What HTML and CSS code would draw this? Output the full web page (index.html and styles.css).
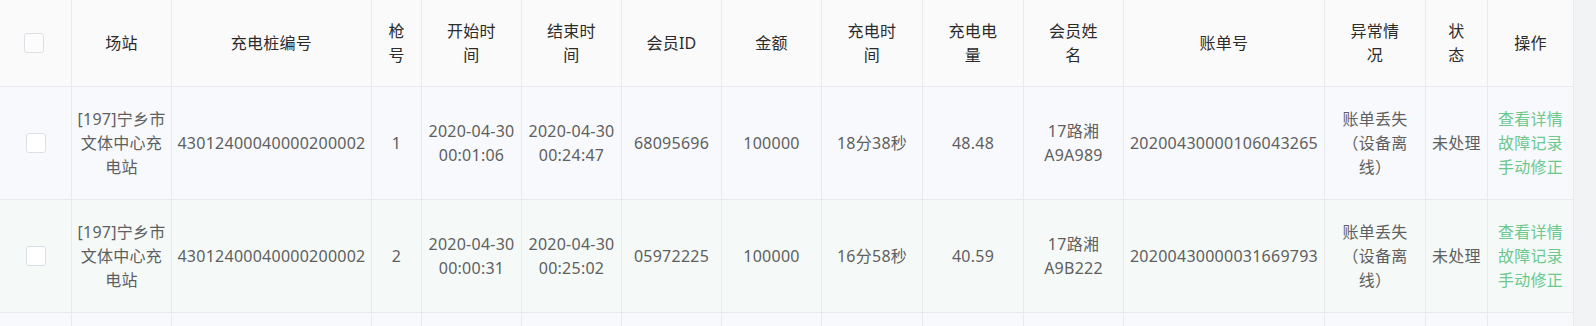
FILE: index.html
```html
<!DOCTYPE html>
<html lang="zh-CN">
<head>
<meta charset="utf-8">
<title>充电记录</title>
<link rel="stylesheet" href="styles.css">
</head>
<body>
<div class="page">
  <div class="grid">
    <div class="th"><span class="cb cb-head"></span></div>
    <div class="th"><span>场站</span></div>
    <div class="th"><span>充电桩编号</span></div>
    <div class="th"><span>枪号</span></div>
    <div class="th"><span>开始时间</span></div>
    <div class="th"><span>结束时间</span></div>
    <div class="th"><span>会员ID</span></div>
    <div class="th"><span>金额</span></div>
    <div class="th"><span>充电时间</span></div>
    <div class="th"><span>充电电量</span></div>
    <div class="th"><span>会员姓名</span></div>
    <div class="th"><span>账单号</span></div>
    <div class="th"><span>异常情况</span></div>
    <div class="th"><span>状态</span></div>
    <div class="th"><span>操作</span></div>

    <div class="td r1"><span class="cb cb-body"></span></div>
    <div class="td r1"><span>[197]宁乡市文体中心充电站</span></div>
    <div class="td r1"><span>43012400040000200002</span></div>
    <div class="td r1"><span>1</span></div>
    <div class="td r1"><span>2020-04-30 00:01:06</span></div>
    <div class="td r1"><span>2020-04-30 00:24:47</span></div>
    <div class="td r1"><span>68095696</span></div>
    <div class="td r1"><span>100000</span></div>
    <div class="td r1"><span>18分38秒</span></div>
    <div class="td r1"><span>48.48</span></div>
    <div class="td r1"><span>17路湘A9A989</span></div>
    <div class="td r1"><span>20200430000106043265</span></div>
    <div class="td r1"><span>账单丢失（设备离线）</span></div>
    <div class="td r1"><span>未处理</span></div>
    <div class="td r1"><span class="ops"><a class="op">查看详情</a><a class="op">故障记录</a><a class="op">手动修正</a></span></div>

    <div class="td r2"><span class="cb cb-body"></span></div>
    <div class="td r2"><span>[197]宁乡市文体中心充电站</span></div>
    <div class="td r2"><span>43012400040000200002</span></div>
    <div class="td r2"><span>2</span></div>
    <div class="td r2"><span>2020-04-30 00:00:31</span></div>
    <div class="td r2"><span>2020-04-30 00:25:02</span></div>
    <div class="td r2"><span>05972225</span></div>
    <div class="td r2"><span>100000</span></div>
    <div class="td r2"><span>16分58秒</span></div>
    <div class="td r2"><span>40.59</span></div>
    <div class="td r2"><span>17路湘A9B222</span></div>
    <div class="td r2"><span>20200430000031669793</span></div>
    <div class="td r2"><span>账单丢失（设备离线）</span></div>
    <div class="td r2"><span>未处理</span></div>
    <div class="td r2"><span class="ops"><a class="op">查看详情</a><a class="op">故障记录</a><a class="op">手动修正</a></span></div>

    <div class="td r1 tail"></div>
    <div class="td r1 tail"></div>
    <div class="td r1 tail"></div>
    <div class="td r1 tail"></div>
    <div class="td r1 tail"></div>
    <div class="td r1 tail"></div>
    <div class="td r1 tail"></div>
    <div class="td r1 tail"></div>
    <div class="td r1 tail"></div>
    <div class="td r1 tail"></div>
    <div class="td r1 tail"></div>
    <div class="td r1 tail"></div>
    <div class="td r1 tail"></div>
    <div class="td r1 tail"></div>
    <div class="td r1 tail"></div>
  </div>
  <div class="gutter"></div>
</div>
</body>
</html>
```

FILE: styles.css
```css
html, body {
  margin: 0;
  padding: 0;
  background: #ffffff;
}
body {
  font-family: "Noto Sans", "Noto Sans CJK SC", sans-serif;
  font-size: 16px;
  line-height: 24px;
  letter-spacing: 0.25px;
  text-spacing-trim: space-all;
  overflow: hidden;
}
.page {
  display: flex;
  width: 1596px;
  height: 326px;
  overflow: hidden;
}
.grid {
  display: grid;
  grid-template-columns: 72px 100px 200px 50px 100px 100px 100px 100px 101px 101px 100px 201px 101px 62px 86px;
  grid-auto-rows: auto;
  align-content: start;
  flex: none;
  width: 1574px;
}
.gutter {
  flex: 1;
  background: #f2f3f5;
}
.th, .td {
  box-sizing: border-box;
  border-right: 1px solid #e9eaee;
  border-bottom: 1px solid #e9eaee;
  display: flex;
  align-items: center;
  justify-content: center;
  text-align: center;
}
.th {
  background: #fafafa;
  color: #2b2b2b;
  padding: 19px 20px;
  min-height: 87px;
}
.td {
  color: #5f5f5f;
  padding: 20px 4px;
}
.tail {
  min-height: 113px;
}
.r1 { background: #f8f9fc; }
.r2 { background: #f5faf8; }
.cb {
  display: block;
  box-sizing: border-box;
  width: 20px;
  height: 20px;
  border: 1px solid #dcdfe6;
  border-radius: 3px;
  background: #ffffff;
  flex: none;
}
.cb-head {
  background: #fcfcfc;
  margin-right: 3px;
}
.cb-body {
  margin-left: 1px;
}
.ops {
  display: flex;
  flex-direction: column;
  align-items: center;
}
.op {
  display: block;
  color: #6cc88d;
  text-decoration: none;
  cursor: pointer;
}
```
